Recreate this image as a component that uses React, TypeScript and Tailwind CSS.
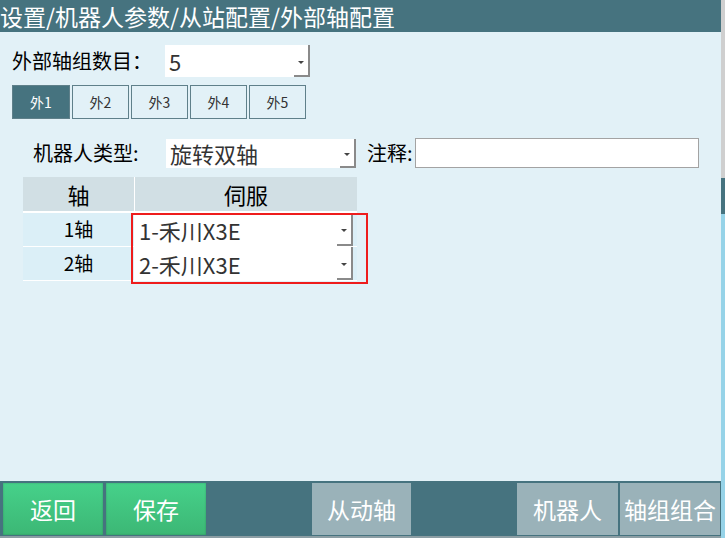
import * as React from 'react'

const font = { fontFamily: '"Noto Sans CJK SC", "Noto Sans", sans-serif' }

function Select({ value, className, textClass }: { value: string; className?: string; textClass?: string }) {
  return (
    <div className={`flex bg-white ${className ?? ''}`}>
      <div className={`flex-1 flex items-center pl-[4px] text-[#333] leading-none ${textClass ?? 'text-[22px]'}`}>{value}</div>
      <div className="flex flex-col w-[16px]">
        <div className="flex-1 flex items-center justify-center border-r-2 border-[#8a8a8a]">
          <div className="w-0 h-0 border-l-[3px] border-r-[3px] border-t-[3px] border-l-transparent border-r-transparent border-t-[#444] mt-[4px]" />
        </div>
        <div className="h-[2px] bg-[#8a8a8a]" />
      </div>
    </div>
  )
}

const tabs = ['外1', '外2', '外3', '外4', '外5']

export default function App() {
  return (
    <div className="w-[725px] h-[538px] flex bg-[#e2f1f7] overflow-hidden" style={font}>
      <div className="flex-1 flex flex-col">
        {/* Title bar */}
        <div className="h-[32px] bg-[#46737f] text-white text-[23px] leading-[32px] whitespace-nowrap">
          设置/机器人参数/从站配置/外部轴配置
        </div>

        <div className="flex-1 flex flex-col">
          {/* group count */}
          <div className="flex items-center mt-[13px] pl-[12px] h-[32px]">
            <span className="text-[20px] text-black w-[153px] whitespace-nowrap">外部轴组数目：</span>
            <Select value="5" className="w-[145px] h-[32px]" />
          </div>

          {/* tabs */}
          <div className="flex gap-[2px] pl-[12px] mt-[8px]">
            {tabs.map((t, i) => (
              <div
                key={t}
                className={`h-[34px] flex items-center justify-center text-[14px] border border-[#5f808a] ${
                  i === 0 ? 'bg-[#46737f] text-white w-[58px]' : 'text-[#333] w-[57px]'
                }`}
              >
                {t}
              </div>
            ))}
          </div>

          {/* robot type */}
          <div className="flex items-center mt-[19px] h-[30px]">
            <span className="text-[20px] text-black pl-[33px] w-[166px] whitespace-nowrap">机器人类型:</span>
            <Select value="旋转双轴" className="w-[190px] h-[29px]" />
            <span className="text-[20px] text-black ml-[11px] whitespace-nowrap">注释:</span>
            <div className="w-[284px] h-[30px] bg-white border border-[#a3a3a3] ml-[2px]" />
          </div>

          {/* axis table */}
          <div className="relative ml-[23px] mt-[9px] w-[334px]">
            <div className="grid grid-cols-[111px_222px] gap-[1px] bg-white">
              <div className="h-[34px] bg-[#d1dfe4] flex items-center justify-center text-[22px] text-black">轴</div>
              <div className="h-[34px] bg-[#d1dfe4] flex items-center justify-center text-[22px] text-black">伺服</div>
            </div>
            {['1', '2'].map((n, i) => (
              <div key={n} className={`grid grid-cols-[111px_222px] gap-[1px] bg-white ${i === 0 ? 'pt-[2px]' : 'pt-[1px] pb-[1px]'}`}>
                <div className="h-[33px] bg-[#dbeff7] flex items-center justify-center text-[19px] text-black">{n}轴</div>
                <div className="h-[33px] bg-[#dbeff7] flex">
                  <Select value={`${n}-禾川X3E`} className="w-[218px] h-[33px]" />
                </div>
              </div>
            ))}
            <div className="absolute left-[108px] top-[36px] w-[237px] h-[71px] border-2 border-[#ee1c1c] pointer-events-none" />
          </div>
        </div>

        {/* bottom bar */}
        <div className="h-[57px] bg-[#46737f] flex items-start pt-[2px] pl-[3px] border-b-2 border-[#8c9ea4]">
          <button className="w-[100px] h-[52px] bg-gradient-to-b from-[#46d18a] to-[#3cb775] text-white text-[23px] shadow-[inset_0_0_2px_rgba(0,0,0,0.25)]">返回</button>
          <button className="w-[100px] h-[52px] ml-[3px] bg-gradient-to-b from-[#46d18a] to-[#3cb775] text-white text-[23px] shadow-[inset_0_0_2px_rgba(0,0,0,0.25)]">保存</button>
          <button className="w-[99px] h-[52px] ml-[106px] bg-[#9ab2b9] text-white text-[23px]">从动轴</button>
          <button className="w-[101px] h-[52px] ml-[106px] bg-[#9ab2b9] text-white text-[23px]">机器人</button>
          <button className="w-[100px] h-[52px] ml-[2px] bg-[#9ab2b9] text-white text-[23px] whitespace-nowrap">轴组组合</button>
        </div>
      </div>

      {/* scrollbar */}
      <div className="w-[4px] flex flex-col">
        <div className="h-[178px] bg-[#cfcfcf]" />
        <div className="h-[36px] bg-[#46737f]" />
        <div className="flex-1 bg-[#96d3e8]" />
      </div>
    </div>
  )
}
